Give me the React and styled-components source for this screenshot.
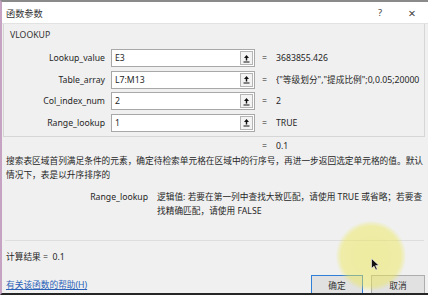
import React from "react";
import styled, { createGlobalStyle } from "styled-components";

const params = [
  { name: "Lookup_value", value: "E3", result: "3683855.426" },
  { name: "Table_array", value: "L7:M13", result: "{\"等级划分\",\"提成比例\";0,0.05;20000" },
  { name: "Col_index_num", value: "2", result: "2" },
  { name: "Range_lookup", value: "1", result: "TRUE" },
];

const CollapseIcon = () => (
  <svg width="9" height="9" viewBox="0 0 9 9">
    <path d="M4.5 1 L7 4 L5.2 4 L5.2 6.5 L3.8 6.5 L3.8 4 L2 4 Z" fill="#111" />
    <rect x="1.5" y="7.5" width="6" height="1" fill="#111" />
  </svg>
);

const Cursor = () => (
  <svg width="9" height="13" viewBox="0 0 9 13">
    <path d="M0.5 0.5 L0.5 10.5 L3 8.2 L4.8 12 L6.3 11.3 L4.6 7.6 L8 7.6 Z" fill="#111" stroke="#fff" strokeWidth="0.6" />
  </svg>
);

const App = () => {
  return (
    <Screen>
      <GlobalStyle />
      <TitleBar>
        <Title>函数参数</Title>
        <Controls>
          <TitleButton>?</TitleButton>
          <TitleButton $big>×</TitleButton>
        </Controls>
      </TitleBar>

      <GroupBox>
        <Legend>VLOOKUP</Legend>
        <ArgGrid>
          {params.map((p) => (
            <React.Fragment key={p.name}>
              <ArgLabel>{p.name}</ArgLabel>
              <ArgInput>
                <span>{p.value}</span>
                <RefButton>
                  <CollapseIcon />
                </RefButton>
              </ArgInput>
              <Eq>=</Eq>
              <ArgResult>{p.result}</ArgResult>
            </React.Fragment>
          ))}
        </ArgGrid>
      </GroupBox>

      <ResultRow>
        <Eq>=</Eq>
        <span>0.1</span>
      </ResultRow>

      <Description>
        <Line>搜索表区域首列满足条件的元素，确定待检索单元格在区域中的行序号，再进一步返回选定单元格的值。默认</Line>
        <Line>情况下，表是以升序排序的</Line>
      </Description>

      <ParamHelp>
        <ParamName>Range_lookup</ParamName>
        <div>
          <Line>逻辑值: 若要在第一列中查找大致匹配，请使用 TRUE 或省略；若要查</Line>
          <Line>找精确匹配，请使用 FALSE</Line>
        </div>
      </ParamHelp>

      <Separator />

      <Formula>计算结果 =&nbsp;&nbsp;0.1</Formula>

      <Footer>
        <HelpLink>有关该函数的帮助(H)</HelpLink>
        <Buttons>
          <DialogButton $primary $w={52}>确定</DialogButton>
          <DialogButton $w={54}>取消</DialogButton>
        </Buttons>
      </Footer>

      <Highlight />
      <CursorSpot>
        <Cursor />
      </CursorSpot>
    </Screen>
  );
};

const GlobalStyle = createGlobalStyle`
  html, body {
    margin: 0;
    padding: 0;
    background: #2a2a2a;
  }
  body {
    font-family: "Noto Sans", "Noto Sans CJK SC", sans-serif;
    font-size: 8.7px;
    color: #262626;
  }
`;

const Screen = styled.div`
  position: relative;
  width: 428px;
  height: 295px;
  box-sizing: border-box;
  overflow: hidden;
  background: #f0f0f0;
  border-top: 2px solid #8a8a8a;
  border-left: 2px solid #c6a3c3;
  border-bottom: 2px solid #262626;
  display: flex;
  flex-direction: column;
`;

const TitleBar = styled.div`
  height: 21px;
  flex-shrink: 0;
  background: #fff;
  border-bottom: 1px solid #e2e2e2;
  display: flex;
  align-items: center;
  padding-left: 4px;
`;

const Title = styled.div`
  font-size: 9.2px;
  color: #333;
`;

const Controls = styled.div`
  margin-left: auto;
  display: flex;
`;

const TitleButton = styled.div`
  width: 32px;
  text-align: center;
  font-size: ${(p) => (p.$big ? "13px" : "9.5px")};
  color: #444;
  line-height: 14px;
`;

const GroupBox = styled.div`
  margin: 0 3px 0 1px;
  height: 113px;
  flex-shrink: 0;
  border: 1px solid #d6d6d6;
  border-top: none;
  padding-top: 5px;
  box-sizing: border-box;
`;

const Legend = styled.div`
  line-height: 12px;
  margin-left: 6px;
  color: #333;
`;

const ArgGrid = styled.div`
  margin-top: 8px;
  display: grid;
  grid-template-columns: 107px 144px 21px 1fr;
  row-gap: 3.5px;
  align-items: center;
`;

const ArgLabel = styled.div`
  text-align: right;
  padding-right: 6px;
  white-space: nowrap;
`;

const ArgInput = styled.div`
  height: 18px;
  box-sizing: border-box;
  border: 1px solid #a8a8a8;
  background: #fff;
  display: flex;
  align-items: center;
  padding-left: 3px;
`;

const RefButton = styled.div`
  margin-left: auto;
  margin-right: 1px;
  width: 13px;
  height: 14px;
  box-sizing: border-box;
  border: 1px solid #b5b5b5;
  background: #f3f3f3;
  display: flex;
  align-items: center;
  justify-content: center;
`;

const Eq = styled.div`
  padding-left: 7px;
  width: 14px;
`;

const ArgResult = styled.div`
  white-space: nowrap;
  overflow: hidden;
`;

const ResultRow = styled.div`
  display: flex;
  line-height: 12px;
  margin-top: 3px;
  padding-left: 253px;
`;

const Description = styled.div`
  margin-top: 2px;
  padding-left: 4px;
  line-height: 14px;
`;

const Line = styled.div`
  white-space: nowrap;
`;

const ParamHelp = styled.div`
  margin-top: 9px;
  display: grid;
  grid-template-columns: 146px 1fr;
  column-gap: 9px;
  line-height: 13.5px;
`;

const ParamName = styled.div`
  text-align: right;
`;

const Separator = styled.div`
  margin: 22px 4px 0 3px;
  height: 1px;
  background: #dedede;
  flex-shrink: 0;
`;

const Formula = styled.div`
  margin-top: 10px;
  padding-left: 4px;
  line-height: 12px;
`;

const Footer = styled.div`
  margin-top: 12px;
  display: flex;
  align-items: flex-start;
  padding-left: 4px;
`;

const HelpLink = styled.a`
  margin-top: 4px;
  line-height: 12px;
  color: #2a62b8;
  text-decoration: underline;
`;

const Buttons = styled.div`
  margin-left: auto;
  margin-right: 3px;
  display: flex;
  gap: 8px;
`;

const DialogButton = styled.div`
  width: ${(p) => p.$w}px;
  height: 21px;
  box-sizing: border-box;
  border: 1px solid ${(p) => (p.$primary ? "#2f7fd6" : "#adadad")};
  background: #e1e1e1;
  display: flex;
  align-items: center;
  justify-content: center;
  color: #333;
`;

const Highlight = styled.div`
  position: absolute;
  left: 334px;
  top: 219px;
  width: 70px;
  height: 70px;
  border-radius: 50%;
  background: radial-gradient(circle, rgba(236, 232, 80, 0.5) 0%, rgba(236, 232, 80, 0.46) 60%, rgba(236, 232, 80, 0) 72%);
  pointer-events: none;
`;

const CursorSpot = styled.div`
  position: absolute;
  left: 369px;
  top: 256px;
  display: flex;
`;

export default App;
